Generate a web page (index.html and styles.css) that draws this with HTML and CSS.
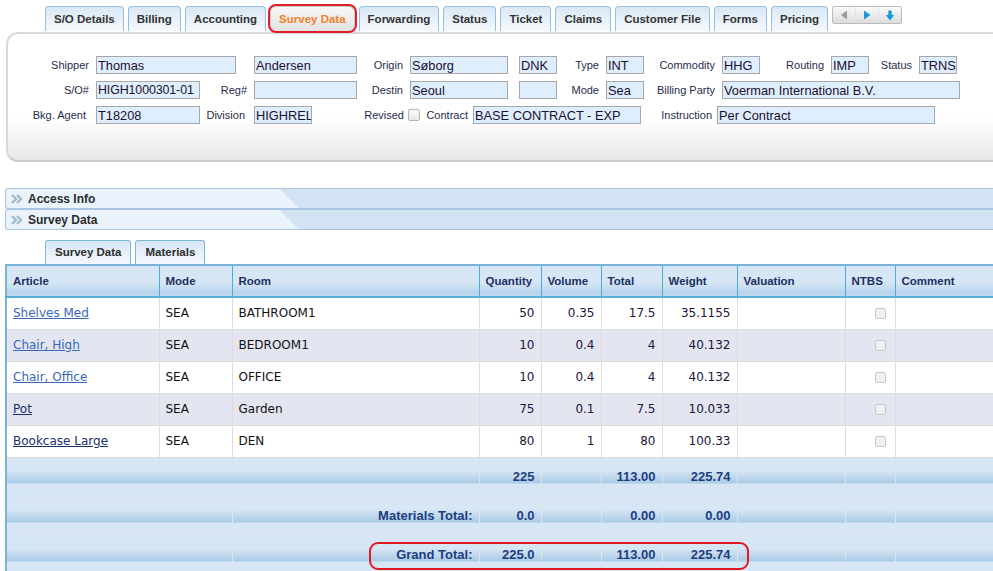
FILE: index.html
```html
<!DOCTYPE html>
<html>
<head>
<meta charset="utf-8">
<title>Survey Data</title>
<link rel="stylesheet" href="styles.css">
</head>
<body>
<div class="tabbar">
  <span class="tab">S/O Details</span>
  <span class="tab">Billing</span>
  <span class="tab">Accounting</span>
  <span class="tab active">Survey Data</span>
  <span class="tab">Forwarding</span>
  <span class="tab">Status</span>
  <span class="tab">Ticket</span>
  <span class="tab">Claims</span>
  <span class="tab">Customer File</span>
  <span class="tab">Forms</span>
  <span class="tab">Pricing</span>
  <div class="navbtns">
    <span class="nb"><svg width="10" height="10" viewBox="0 0 10 10"><polygon points="8,0.5 8,9.5 2,5" fill="#9b9b9b"/></svg></span>
    <span class="nb"><svg width="10" height="10" viewBox="0 0 10 10"><polygon points="2,0.5 2,9.5 8.5,5" fill="#1a9bd8"/></svg></span>
    <span class="nb"><svg width="10" height="11" viewBox="0 0 10 11"><rect x="3.3" y="0.5" width="3.4" height="5" fill="#1a9bd8"/><polygon points="0.8,5 9.2,5 5,10.5" fill="#1a9bd8"/></svg></span>
  </div>
</div>

<div class="panel">
  <div class="frow">
    <label class="lbl w88">Shipper</label><input class="fi w140" value="Thomas" readonly>
    <span class="lbl w18"></span><input class="fi w103" value="Andersen" readonly>
    <label class="lbl w53">Origin</label><input class="fi w98" value="Søborg" readonly>
    <span class="lbl w11"></span><input class="fi w38" value="DNK" readonly>
    <label class="lbl w49">Type</label><input class="fi w38" value="INT" readonly>
    <label class="lbl w78">Commodity</label><input class="fi w38" value="HHG" readonly>
    <label class="lbl w71">Routing</label><input class="fi w38" value="IMP" readonly>
    <label class="lbl w50">Status</label><input class="fi w38" value="TRNS" readonly>
  </div>
  <div class="frow">
    <label class="lbl w88">S/O#</label><input class="fi w104 tight" value="HIGH1000301-01" readonly>
    <label class="lbl w54">Reg#</label><input class="fi w103" value="" readonly>
    <label class="lbl w53">Destin</label><input class="fi w98" value="Seoul" readonly>
    <span class="lbl w11"></span><input class="fi w38" value="" readonly>
    <label class="lbl w49">Mode</label><input class="fi w38" value="Sea" readonly>
    <label class="lbl w78">Billing Party</label><input class="fi w238" value="Voerman International B.V." readonly>
  </div>
  <div class="frow">
    <label class="lbl w88 pr10">Bkg. Agent</label><input class="fi w104" value="T18208" readonly>
    <label class="lbl w54 pr9">Division</label><input class="fi w58" value="HIGHRELOC" readonly>
    <label class="lbl w96 pr4">Revised</label><span class="cbx"></span>
    <label class="lbl w53 pr5">Contract</label><input class="fi w168" value="BASE CONTRACT - EXP" readonly>
    <label class="lbl w76 pr5">Instruction</label><input class="fi w218" value="Per Contract" readonly>
  </div>
</div>

<div class="sections">
  <div class="sbar">
    <svg class="chev" width="12" height="10" viewBox="0 0 12 10"><polyline points="1,1 5,5 1,9" fill="none" stroke="#9fbccb" stroke-width="2.4"/><polyline points="6,1 10,5 6,9" fill="none" stroke="#9fbccb" stroke-width="2.4"/></svg>
    <span>Access Info</span>
  </div>
  <div class="sbar">
    <svg class="chev" width="12" height="10" viewBox="0 0 12 10"><polyline points="1,1 5,5 1,9" fill="none" stroke="#9fbccb" stroke-width="2.4"/><polyline points="6,1 10,5 6,9" fill="none" stroke="#9fbccb" stroke-width="2.4"/></svg>
    <span>Survey Data</span>
  </div>
</div>

<div class="subtabs">
  <span class="stab">Survey Data</span>
  <span class="stab">Materials</span>
</div>

<div class="gridwrap">
  <table class="grid">
    <colgroup>
      <col class="c-article"><col class="c-mode"><col class="c-room"><col class="c-qty"><col class="c-vol"><col class="c-total"><col class="c-weight"><col class="c-val"><col class="c-ntbs"><col class="c-comment">
    </colgroup>
    <thead>
      <tr><th>Article</th><th>Mode</th><th>Room</th><th>Quantity</th><th>Volume</th><th>Total</th><th>Weight</th><th>Valuation</th><th>NTBS</th><th>Comment</th></tr>
    </thead>
    <tbody>
      <tr><td><a href="#" class="lnk">Shelves Med</a></td><td>SEA</td><td>BATHROOM1</td><td class="num">50</td><td class="num">0.35</td><td class="num">17.5</td><td class="num">35.1155</td><td></td><td class="chk"><span class="cb"></span></td><td></td></tr>
      <tr class="alt"><td><a href="#" class="lnk">Chair, High</a></td><td>SEA</td><td>BEDROOM1</td><td class="num">10</td><td class="num">0.4</td><td class="num">4</td><td class="num">40.132</td><td></td><td class="chk"><span class="cb"></span></td><td></td></tr>
      <tr><td><a href="#" class="lnk">Chair, Office</a></td><td>SEA</td><td>OFFICE</td><td class="num">10</td><td class="num">0.4</td><td class="num">4</td><td class="num">40.132</td><td></td><td class="chk"><span class="cb"></span></td><td></td></tr>
      <tr class="alt"><td><a href="#" class="lnk visited">Pot</a></td><td>SEA</td><td>Garden</td><td class="num">75</td><td class="num">0.1</td><td class="num">7.5</td><td class="num">10.033</td><td></td><td class="chk"><span class="cb"></span></td><td></td></tr>
      <tr><td><a href="#" class="lnk visited">Bookcase Large</a></td><td>SEA</td><td>DEN</td><td class="num">80</td><td class="num">1</td><td class="num">80</td><td class="num">100.33</td><td></td><td class="chk"><span class="cb"></span></td><td></td></tr>
    </tbody>
    <tfoot>
      <tr><td colspan="3"></td><td class="num">225</td><td></td><td class="num">113.00</td><td class="num">225.74</td><td></td><td></td><td></td></tr>
      <tr><td colspan="2"></td><td class="num">Materials Total:</td><td class="num">0.0</td><td></td><td class="num">0.00</td><td class="num">0.00</td><td></td><td></td><td></td></tr>
      <tr><td colspan="2"></td><td class="num">Grand Total:</td><td class="num">225.0</td><td></td><td class="num">113.00</td><td class="num">225.74</td><td></td><td></td><td></td></tr>
    </tfoot>
  </table>
  <div class="hl-grand"></div>
</div>
</body>
</html>
```

FILE: styles.css
```css
html, body {
  margin: 0;
  padding: 0;
  overflow: hidden;
  background: #ffffff;
}
body {
  width: 993px;
  height: 571px;
  font-family: "Liberation Sans", Arial, sans-serif;
  color: #222;
}

/* ---------- top tabs ---------- */
.tabbar {
  display: flex;
  align-items: flex-start;
  gap: 4px;
  height: 32px;
  box-sizing: border-box;
  padding: 6px 0 0 45px;
}
.tab {
  flex: none;
  height: 25px;
  box-sizing: border-box;
  padding: 0 8px;
  line-height: 24px;
  border: 1px solid #93c1e2;
  border-bottom: none;
  border-radius: 4px 4px 0 0;
  background: linear-gradient(#d9e7f5, #f6f9fd);
  font-size: 11.5px;
  font-weight: bold;
  color: #333;
  white-space: nowrap;
}
.tab.active {
  background: linear-gradient(#f7f7f7, #e2e2e2);
  border-color: #c9c9c9;
  color: #f3802b;
  border-radius: 6px;
  outline: 2px solid #e11d27;
  outline-offset: 0;
}
.navbtns {
  flex: none;
  display: flex;
  height: 18px;
  box-sizing: border-box;
  border: 1px solid #bdbdbd;
  border-radius: 2px;
  background: linear-gradient(#fafafa, #dcdcdc);
}
.nb {
  width: 22px;
  display: flex;
  align-items: center;
  justify-content: center;
  border-left: 1px solid #e4e4e4;
}
.nb:first-child { border-left: none; }

/* ---------- header panel ---------- */
.panel {
  margin-left: 6px;
  height: 130px;
  box-sizing: border-box;
  padding-top: 22px;
  border: 2px solid #d9d9d9;
  border-bottom-color: #cbcbcb;
  border-right: none;
  border-radius: 12px 0 0 12px;
  background: linear-gradient(#ffffff 0, #ffffff 66%, #e8e8e8 100%);
  display: flex;
  flex-direction: column;
  gap: 7px;
}
.frow {
  display: flex;
  align-items: center;
  height: 18px;
}
.lbl {
  flex: none;
  box-sizing: border-box;
  padding-right: 7px;
  text-align: right;
  font-size: 11px;
  color: #1f2c4c;
  white-space: nowrap;
}
.pr10 { padding-right: 10px; }
.pr9 { padding-right: 9px; }
.pr5 { padding-right: 5px; }
.pr4 { padding-right: 4px; }
.fi {
  flex: none;
  height: 18px;
  box-sizing: border-box;
  margin: 0;
  padding: 0 0 0 1px;
  border: 1px solid #a7a7a7;
  background: #dfeefd;
  font-family: "Liberation Sans", Arial, sans-serif;
  font-size: 12.8px;
  color: #1b1030;
  outline: none;
}
.fi.tight {
  font-size: 12.4px;
  letter-spacing: -0.1px;
}
.cbx {
  flex: none;
  width: 12px;
  height: 12px;
  box-sizing: border-box;
  border: 1px solid #b4b4b4;
  border-radius: 2px;
  background: linear-gradient(#fdfdfd, #e6e6e6);
}
.w11 { width: 11px; }
.w18 { width: 18px; }
.w38 { width: 38px; }
.w49 { width: 49px; }
.w50 { width: 50px; }
.w53 { width: 53px; }
.w54 { width: 54px; }
.w58 { width: 58px; }
.w71 { width: 71px; }
.w76 { width: 76px; }
.w78 { width: 78px; }
.w88 { width: 88px; }
.w96 { width: 96px; }
.w98 { width: 98px; }
.w103 { width: 103px; }
.w104 { width: 104px; }
.w140 { width: 140px; }
.w168 { width: 168px; }
.w218 { width: 218px; }
.w238 { width: 238px; }

/* ---------- section bars ---------- */
.sections {
  margin-top: 26px;
}
.sbar {
  margin-left: 5px;
  height: 21px;
  box-sizing: border-box;
  border: 1px solid #a9c5e1;
  border-right: none;
  border-radius: 3px 0 0 3px;
  display: flex;
  align-items: center;
  gap: 5px;
  padding-left: 5px;
  font-size: 12px;
  font-weight: bold;
  color: #2b2b2b;
  background:
    linear-gradient(to top right, #eaf3fb 50%, transparent 50%) 274px 0 / 18px 100% no-repeat,
    linear-gradient(#eaf3fb, #eaf3fb) 0 0 / 274px 100% no-repeat,
    #d3e3f3;
}
.chev { flex: none; }

/* ---------- sub tabs ---------- */
.subtabs {
  display: flex;
  gap: 4px;
  padding-left: 45px;
  margin-top: 10px;
}
.stab {
  height: 24px;
  box-sizing: border-box;
  padding: 0 9px;
  line-height: 23px;
  border: 1px solid #7db7da;
  border-bottom: none;
  border-radius: 3px 3px 0 0;
  background: linear-gradient(#d8e7f5, #f4f8fc);
  font-size: 11.5px;
  font-weight: bold;
  color: #2e2e2e;
}

/* ---------- grid ---------- */
.gridwrap {
  position: relative;
  margin-left: 5px;
}
.grid {
  border-collapse: collapse;
  table-layout: fixed;
  width: 1039px;
  font-family: "DejaVu Sans", Verdana, sans-serif;
  font-size: 12px;
  color: #111;
}
.c-article { width: 153px; }
.c-mode { width: 73px; }
.c-room { width: 247px; }
.c-qty { width: 62px; }
.c-vol { width: 60px; }
.c-total { width: 61px; }
.c-weight { width: 75px; }
.c-val { width: 108px; }
.c-ntbs { width: 50px; }
.c-comment { width: 150px; }

.grid th {
  height: 30px;
  padding: 0 6px;
  text-align: left;
  font-family: "Liberation Sans", Arial, sans-serif;
  font-size: 11.5px;
  font-weight: bold;
  color: #1c2f62;
  border-left: 1px solid #45b0d2;
  border-right: 1px solid #45b0d2;
  border-top: 2px solid #78b3db;
  border-bottom: 2px solid #58aed7;
  background: linear-gradient(#d6e6f5 0, #d6e6f5 55%, #b6d4ec 90%, #c4dcf0 100%);
}
.grid th:first-child,
.grid td:first-child {
  border-left: 2px solid #79b4dc;
}
.grid tbody tr { height: 32px; background: #ffffff; }
.grid tbody tr.alt { background: #e3e6f1; }
.grid td {
  padding: 0 6px;
  border: 1px solid #dcdcdc;
  white-space: nowrap;
  overflow: hidden;
}
.grid td.num { text-align: right; color: #21153c; }
.grid td.chk { text-align: right; padding-right: 9px; }
.cb {
  display: inline-block;
  vertical-align: middle;
  width: 11px;
  height: 11px;
  box-sizing: border-box;
  border: 1px solid #c9c9c9;
  border-radius: 2px;
  background: #f1f1f1;
}
.lnk { color: #3868bb; text-decoration: underline; }
.lnk.visited { color: #1b2e6c; }

.grid tfoot tr { height: 39px; }
.grid tfoot td {
  vertical-align: top;
  padding-top: 11px;
  font-family: "Liberation Sans", Arial, sans-serif;
  font-size: 13px;
  font-weight: bold;
  border: 1px solid #dfe3e8;
  background: linear-gradient(#d6e6f4 0, #d6e6f4 13px, #a8cae6 26px, #d6e6f4 26px, #d6e6f4 100%);
}
.grid tfoot td.num { color: #1f3c80; }

.hl-grand {
  position: absolute;
  left: 364px;
  top: 278px;
  width: 380px;
  height: 28px;
  box-sizing: border-box;
  border: 2px solid #e01822;
  border-radius: 9px;
}
```
